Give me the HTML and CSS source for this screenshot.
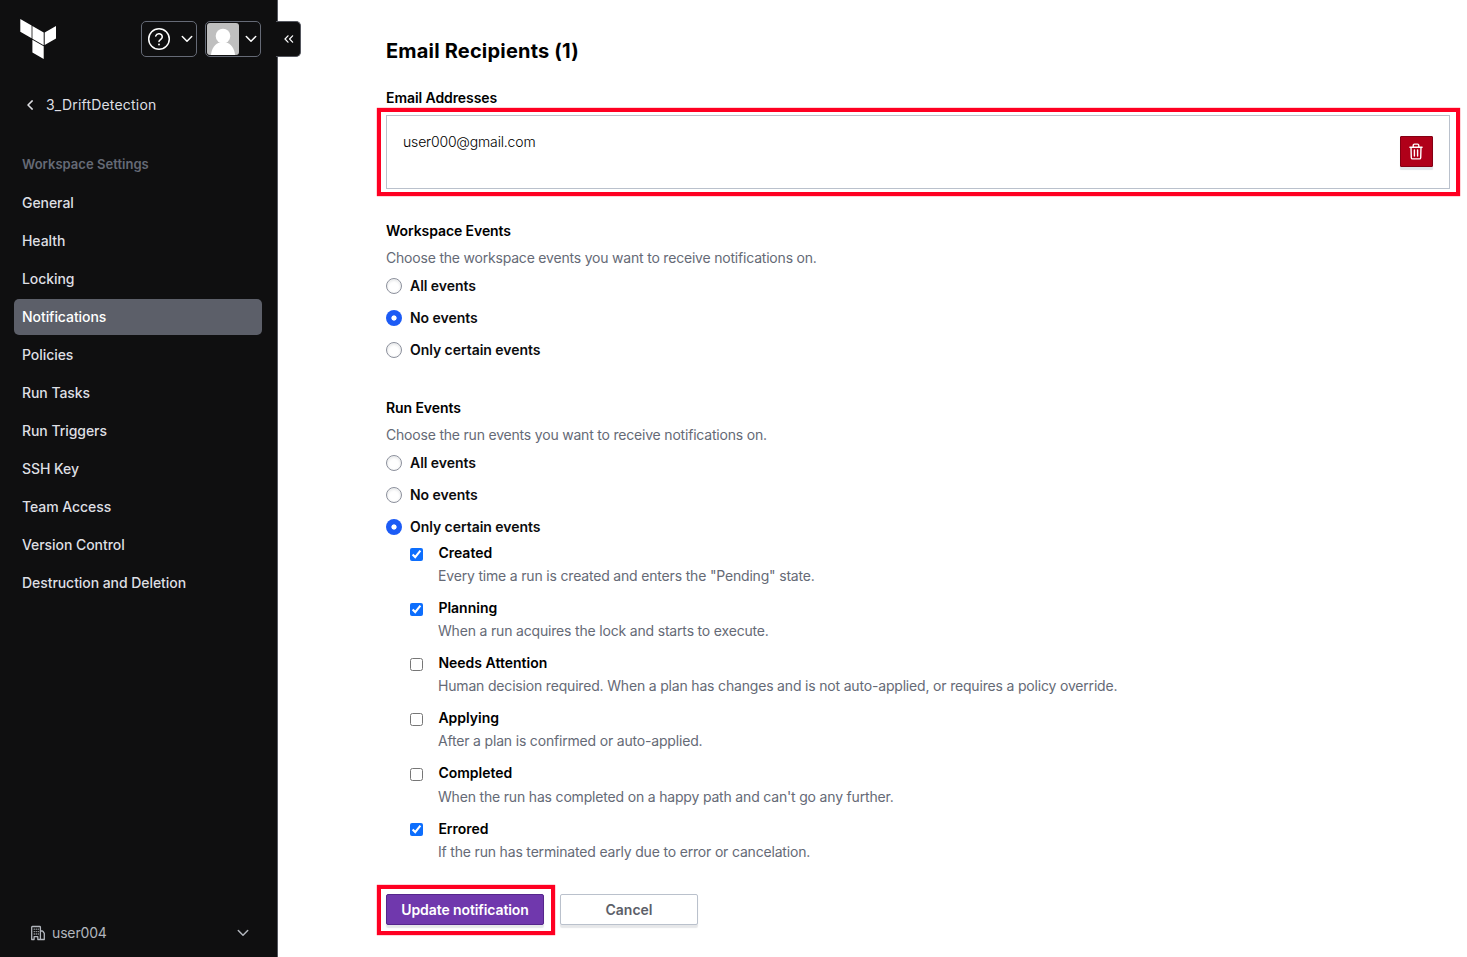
FILE: index.html
```html
<!DOCTYPE html>
<html lang="en">
<head>
<meta charset="utf-8">
<title>Notifications</title>
<link rel="stylesheet" href="styles.css">
</head>
<body>
<div class="app">
  <aside class="sidebar">
    <header class="side-top">
      <svg class="logo" width="37" height="42" viewBox="0 0 37 42" fill="#fff">
        <path d="M.3 1L11.600 7.500V20.200L.3 13.700zM12.400 8L23.700 14.500V27.200L12.400 20.700zM24.700 14.500L36 8V20.500L24.700 27zM12.400 21.800L23.700 28.300V41L12.400 34.500z"/>
      </svg>
      <div class="side-actions">
        <button class="menu-btn help">
          <svg width="24" height="24" viewBox="0 0 24 24" fill="none" stroke="#fff" stroke-width="1.500" stroke-linecap="round" stroke-linejoin="round"><circle cx="12" cy="12" r="10.300"/><path d="M8.700 9a3.400 3.400 0 0 1 6.600 1.100c0 2.300-3.300 2.600-3.300 4.500"/><path d="M12 17.500v.1" stroke-width="1.900"/></svg>
          <svg class="chev" width="12" height="8" viewBox="0 0 12 8" fill="none" stroke="#fff" stroke-width="1.500" stroke-linecap="round" stroke-linejoin="round"><path d="M1.300 1.500L6 6.200l4.700-4.700"/></svg>
        </button>
        <button class="menu-btn account">
          <svg class="avatar" width="32" height="32" viewBox="0 0 32 32"><rect width="32" height="32" fill="#bfbfbf"/><circle cx="16" cy="13" r="7.300" fill="#fff"/><path d="M4 32c.5-7 4.500-11.500 9-12.800h6c4.500 1.300 8.500 5.800 9 12.800z" fill="#fff"/></svg>
          <svg class="chev" width="12" height="8" viewBox="0 0 12 8" fill="none" stroke="#fff" stroke-width="1.500" stroke-linecap="round" stroke-linejoin="round"><path d="M1.300 1.500L6 6.200l4.700-4.700"/></svg>
        </button>
      </div>
      <button class="collapse">
        <svg width="10" height="8" viewBox="0 0 10 8" fill="none" stroke="#fff" stroke-width="1.200" stroke-linecap="round" stroke-linejoin="round"><path d="M4 .8L1 4l3 3.200M8.600.8L5.600 4l3 3.200"/></svg>
      </button>
    </header>
    <a class="back">
      <svg width="8" height="10" viewBox="0 0 8 10" fill="none" stroke="#dedfe3" stroke-width="1.500" stroke-linecap="round" stroke-linejoin="round"><path d="M6.200.9L2 5l4.200 4.100"/></svg>
      <span>3_DriftDetection</span>
    </a>
    <h2 class="side-title"><span>Workspace Settings</span></h2>
    <nav class="nav">
      <a><span>General</span></a>
      <a><span>Health</span></a>
      <a><span>Locking</span></a>
      <a class="active"><span>Notifications</span></a>
      <a><span>Policies</span></a>
      <a><span>Run Tasks</span></a>
      <a><span>Run Triggers</span></a>
      <a><span>SSH Key</span></a>
      <a><span>Team Access</span></a>
      <a><span>Version Control</span></a>
      <a><span>Destruction and Deletion</span></a>
    </nav>
    <footer class="org">
      <svg width="16" height="16" viewBox="0 0 16 16" fill="none" stroke="#b2b6bd" stroke-width="1.300" stroke-linejoin="round" stroke-linecap="round"><path d="M1.700 14.500V2.200q0-.7.700-.7h7.300q.7 0 .7.700v12.300M10.400 6h1.800q.5 0 .8.500l1.300 1.800v6.200h-3.900M1.700 14.500h2.400v-2.800h3.700v2.800h2.600"/><path d="M4.200 4.200h.1M6.200 4.200h.1M8.200 4.200h.1M4.200 6.600h.1M6.200 6.600h.1M8.200 6.600h.1M4.200 9h.1M6.200 9h.1M8.200 9h.1"/></svg>
      <span>user004</span>
      <svg class="chev" width="12" height="8" viewBox="0 0 12 8" fill="none" stroke="#b2b6bd" stroke-width="1.500" stroke-linecap="round" stroke-linejoin="round"><path d="M1.300 1.500L6 6.200l4.700-4.700"/></svg>
    </footer>
  </aside>

  <main class="main">
    <h1>Email Recipients (1)</h1>
    <h3 class="label">Email Addresses</h3>
    <div class="recipient">
      <span class="email">user000@gmail.com</span>
      <button class="delete">
        <svg width="14" height="17" viewBox="0 0 14 17" fill="none" stroke="#fff" stroke-width="1.400" stroke-linecap="round" stroke-linejoin="round"><path d="M.9 4.200h12.200M2 4.200l.3 10.500q.1 1.200 1.200 1.200h7q1.100 0 1.200-1.200L12 4.200M4.200 4V2.400q0-1.300 1.300-1.300h3q1.300 0 1.300 1.300V4M5.400 7v6M8.600 7v6"/></svg>
      </button>
      <div class="mark"></div>
    </div>

    <section class="group workspace">
      <h3 class="label">Workspace Events</h3>
      <p class="hint">Choose the workspace events you want to receive notifications on.</p>
      <label class="radio"><i></i><span>All events</span></label>
      <label class="radio"><i class="on"></i><span>No events</span></label>
      <label class="radio"><i></i><span>Only certain events</span></label>
    </section>

    <section class="group runs">
      <h3 class="label">Run Events</h3>
      <p class="hint">Choose the run events you want to receive notifications on.</p>
      <label class="radio"><i></i><span>All events</span></label>
      <label class="radio"><i></i><span>No events</span></label>
      <label class="radio"><i class="on"></i><span>Only certain events</span></label>
      <div class="checks">
        <div class="check"><input type="checkbox" checked><div><h4>Created</h4><p class="hint">Every time a run is created and enters the "Pending" state.</p></div></div>
        <div class="check"><input type="checkbox" checked><div><h4>Planning</h4><p class="hint">When a run acquires the lock and starts to execute.</p></div></div>
        <div class="check"><input type="checkbox"><div><h4>Needs Attention</h4><p class="hint">Human decision required. When a plan has changes and is not auto-applied, or requires a policy override.</p></div></div>
        <div class="check"><input type="checkbox"><div><h4>Applying</h4><p class="hint">After a plan is confirmed or auto-applied.</p></div></div>
        <div class="check"><input type="checkbox"><div><h4>Completed</h4><p class="hint">When the run has completed on a happy path and can't go any further.</p></div></div>
        <div class="check"><input type="checkbox" checked><div><h4>Errored</h4><p class="hint">If the run has terminated early due to error or cancelation.</p></div></div>
      </div>
    </section>

    <div class="buttons">
      <div class="primary-wrap"><button class="btn primary">Update notification</button><div class="mark"></div></div>
      <button class="btn secondary">Cancel</button>
    </div>
  </main>
</div>
</body>
</html>
```
FILE: styles.css
```css
* { box-sizing: border-box; }
body { margin: 0; background: #fff; color: #0c0c0e; font-family: Inter, sans-serif; font-size: 14px; overflow: hidden; }
h1, h2, h3, h4, p { margin: 0; }
button { font: inherit; margin: 0; padding: 0; }
svg { display: block; flex: none; }
.app { display: flex; height: 957px; }

.sidebar { width: 278px; flex: none; display: flex; flex-direction: column; background: #0f0f10; border-right: 1px solid #55575f; color: #dedfe3; }
.side-top { position: relative; display: flex; justify-content: space-between; padding: 18px 16px 0 20px; height: 87px; flex: none; }
.side-actions { display: flex; gap: 8px; padding-top: 3px; }
.menu-btn { display: flex; align-items: center; justify-content: space-between; width: 56px; height: 36px; border: 1px solid #656a76; border-radius: 5px; background: transparent; }
.help { padding: 0 3px 0 5px; }
.account { padding: 0 3px 0 1px; }
.avatar { border-radius: 3px; }
.collapse { position: absolute; left: 276px; top: 21px; width: 25px; height: 36px; display: flex; align-items: center; justify-content: center; padding-left: 2px; background: #0f0f10; border: 1px solid #55575f; border-left: 0; border-radius: 0 5px 5px 0; }
.back { display: flex; align-items: center; gap: 12px; height: 36px; padding-left: 26px; font-size: 14px; font-weight: 400; letter-spacing: 0.2px; }
.back span, .side-title span, .nav span, .org span { padding-bottom: 2px; }
.side-title { display: flex; align-items: center; height: 24px; margin-top: 30px; padding-left: 22px; font-size: 13px; font-weight: 600; color: #656a76; letter-spacing: 0.030px; }
.nav { display: flex; flex-direction: column; gap: 2px; margin: 8px 15px 0 14px; }
.nav a { display: flex; align-items: center; height: 36px; padding-left: 8px; border-radius: 5px; font-weight: 500; font-size: 14px; letter-spacing: -0.060px; }
.nav .active { background: #5c5f69; color: #fff; }
.org { display: flex; align-items: center; gap: 6px; height: 36px; margin-top: auto; margin-bottom: 6px; padding: 0 28px 0 30px; color: #b2b6bd; letter-spacing: -0.150px; }
.org .chev { margin-left: auto; }

.main { flex: 1; padding: 37px 17px 0 108px; }
h1 { font-size: 20px; line-height: 28px; font-weight: 700; color: #000; letter-spacing: 0.190px; }
.label { font-size: 14px; line-height: 20px; font-weight: 600; color: #000; letter-spacing: -0.080px; }
h1 + .label { margin-top: 23px; }
.recipient { position: relative; display: flex; justify-content: space-between; height: 74px; margin-top: 7px; padding: 20px 16px; border: 1px solid #bac1cc; }
.email { line-height: 14px; margin-top: -1px; font-weight: 300; letter-spacing: -0.170px; color: #000; }
.delete { display: flex; align-items: center; justify-content: center; padding-right: 1px; width: 33px; height: 31px; background: #b00019; border: 1px solid #850014; border-radius: 1px; box-shadow: 0 3px 1px #e2e5e9; }
.mark { position: absolute; border: 4px solid #ff0022; box-shadow: 0 0 1px #ff0022; pointer-events: none; }
.recipient .mark { inset: -8.500px -10.500px -8px -10px; }
.group .hint { color: #656a76; line-height: 20px; font-weight: 400; letter-spacing: -0.200px; }
.group > .hint { margin-top: 7px; }
.workspace { margin-top: 32px; }
.runs { margin-top: 32px; }
.radio { display: flex; align-items: center; gap: 8px; height: 32px; font-weight: 600; letter-spacing: -0.050px; }
.radio span { padding-bottom: 2px; }
.group > .hint + .radio { margin-top: 2px; }
.radio i { width: 16px; height: 16px; border: 1px solid #8c909c; border-radius: 50%; box-shadow: inset 0 1px 2px 1px rgba(101, 106, 118, 0.12); }
.radio .on { background: radial-gradient(circle, #fff 2.200px, #1c5bf5 3px); border: 0; box-shadow: none; }
.checks { padding-top: 0.050px; }
.check { display: flex; gap: 15.400px; height: 55.100px; padding-left: 24px; }
.check input { width: 13px; height: 13px; margin: 4.800px 0 0; accent-color: #0d6efd; }
.check h4 { font-size: 14px; line-height: 20px; font-weight: 600; color: #000; }
.check .hint { margin: 3.100px 0 0 -0.400px; letter-spacing: -0.180px; }
.buttons { display: flex; gap: 16px; margin-top: 20.550px; }
.primary-wrap { position: relative; width: 158px; }
.primary-wrap .mark { inset: -9.500px -10.500px -10px -9px; }
.btn { height: 31px; border-radius: 2px; font-weight: 600; font-size: 14px; box-shadow: 0 3px 1px rgba(101, 106, 118, 0.16); }
.primary { width: 158px; background: #7038ad; border: 1px solid #56268c; color: #fff; letter-spacing: -0.100px; }
.secondary { width: 138px; background: #fff; border: 1px solid #bac1cc; color: #5c5f69; }
```
